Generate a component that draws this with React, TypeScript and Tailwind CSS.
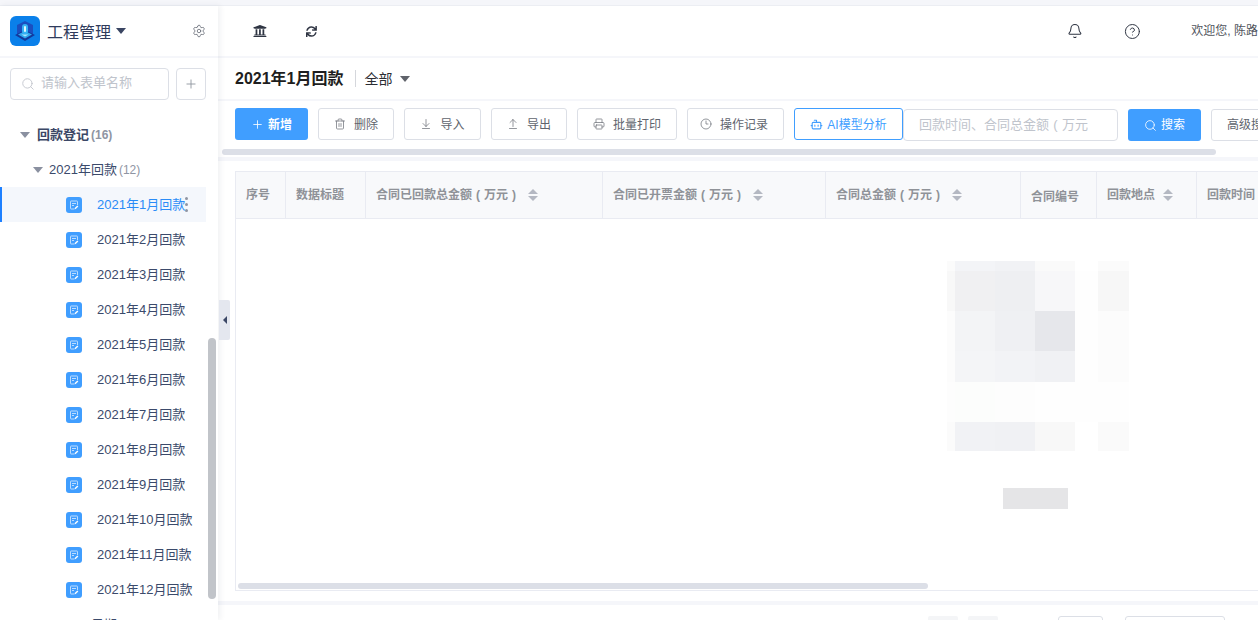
import React from "react";
import { ArrowDownToLine, ArrowUpFromLine, Bell, Bot, CircleHelp, Clock3, Plus, Printer, Search, Settings, Trash2 } from "lucide-react";
import { FaSync, FaUniversity } from "react-icons/fa";

const months = ["2021年1月回款", "2021年2月回款", "2021年3月回款", "2021年4月回款", "2021年5月回款", "2021年6月回款", "2021年7月回款", "2021年8月回款", "2021年9月回款", "2021年10月回款", "2021年11月回款", "2021年12月回款"];

const tools = [
  { label: "删除", icon: Trash2, width: "w-[76px]" },
  { label: "导入", icon: ArrowDownToLine, width: "w-[77px]" },
  { label: "导出", icon: ArrowUpFromLine, width: "w-[76px]" },
  { label: "批量打印", icon: Printer, width: "w-[100px]" },
  { label: "操作记录", icon: Clock3, width: "w-[97px] pr-[3px]" },
];

const columns = [
  { label: "序号", width: "w-[50px]" },
  { label: "数据标题", width: "w-[80px]" },
  { label: "合同已回款总金额", unit: true, width: "w-[237px]", sort: true },
  { label: "合同已开票金额", unit: true, width: "w-[223px]", sort: true },
  { label: "合同总金额", unit: true, width: "w-[195px]", sort: true },
  { label: "合同编号", width: "w-[76px]", low: true },
  { label: "回款地点", width: "w-[100px]", sort: true },
  { label: "回款时间", width: "w-[100px]" },
];

// pixelated placeholder in the middle of the empty table
const tiles = [
  [947, 261, 8, 10, "#fbfbfb"], [955, 261, 40, 10, "#f3f4f7"], [995, 261, 40, 10, "#f1f2f5"], [1035, 261, 40, 10, "#fafafa"], [1098, 261, 31, 10, "#fbfbfb"],
  [947, 271, 8, 40, "#f8f8f8"], [955, 271, 40, 40, "#f0f0f2"], [995, 271, 40, 40, "#eeeff2"], [1035, 271, 40, 40, "#f7f7f9"], [1075, 271, 23, 40, "#fefefe"], [1098, 271, 31, 40, "#f7f7f7"],
  [947, 311, 8, 40, "#fcfcfc"], [955, 311, 40, 40, "#f3f4f6"], [995, 311, 40, 40, "#eff0f3"], [1035, 311, 40, 40, "#e6e7eb"], [1075, 311, 23, 40, "#fefefe"], [1098, 311, 31, 40, "#fcfcfc"],
  [947, 351, 8, 31, "#fcfcfc"], [955, 351, 40, 31, "#f4f5f7"], [995, 351, 40, 31, "#f2f3f6"], [1035, 351, 40, 31, "#f0f1f4"], [1075, 351, 23, 31, "#fefefe"], [1098, 351, 31, 31, "#fcfcfc"],
  [947, 382, 8, 40, "#fdfdfd"], [955, 382, 40, 40, "#fcfdfc"], [995, 382, 40, 40, "#fdfdfd"], [1035, 382, 94, 40, "#fefefe"],
  [947, 422, 8, 29, "#fbfbfb"], [955, 422, 40, 29, "#f1f2f5"], [995, 422, 40, 29, "#f0f1f4"], [1035, 422, 40, 29, "#f8f8f8"], [1098, 422, 31, 29, "#fafafa"],
  [1003, 488, 65, 21, "#e5e5e7"],
] as const;

// brackets sit centred in a full-width cell in the reference
function Paren({ children }: { children: string }) {
  return <span className="inline-block w-[1em] text-center">{children}</span>;
}

function Caret({ className }: { className: string }) {
  return <span className={`inline-block h-0 w-0 border-x-[5px] border-t-[6px] border-x-transparent ${className}`} />;
}

function SortArrows() {
  return (
    <span className="ml-2 flex flex-col gap-[2px]">
      <span className="h-0 w-0 border-x-[5px] border-b-[5px] border-x-transparent border-b-[#b4b8c2]" />
      <span className="h-0 w-0 border-x-[5px] border-t-[5px] border-x-transparent border-t-[#b4b8c2]" />
    </span>
  );
}

function FormIcon() {
  return (
    <span className="flex h-4 w-4 shrink-0 items-center justify-center rounded-[3px] bg-[#409eff]">
      <svg width="10" height="10" viewBox="0 0 10 10" fill="none" stroke="#bcdcff" strokeWidth="1">
        <path d="M8.500 5V1.500a.5.5 0 0 0-.5-.5H2a.5.5 0 0 0-.5.5v7a.5.5 0 0 0 .5.5h3.500" />
        <path d="M3 3.500h4M3 5.500h2" />
        <path d="M6 8.800 8.800 6" strokeWidth="1.400" stroke="#ffffff" />
      </svg>
    </span>
  );
}

function Logo() {
  return (
    <span className="flex h-[30px] w-[30px] shrink-0 items-center justify-center rounded-[6px] bg-[#0a80ea]">
      <svg width="26" height="26" viewBox="0 0 26 26">
        <path d="M13 3l8 4v9l-8 4-8-4V7z" fill="#1a4fc0" />
        <path d="M3 17l10-5 10 5-10 6z" fill="#12399c" />
        <path d="M6 16.500l7-3.500 7 3.500-7 4z" fill="#2fa8ee" />
        <rect x="10" y="6" width="6" height="10" rx="3" fill="#35b4f5" />
        <rect x="12" y="8" width="2" height="6" rx="1" fill="#dff6ff" />
        <path d="M9.500 16.500h7l-3.500 2z" fill="#a8e6ff" />
      </svg>
    </span>
  );
}

function Sidebar() {
  return (
    <aside className="relative z-10 flex w-[218px] shrink-0 flex-col overflow-hidden bg-white shadow-[2px_0_6px_rgba(30,40,70,0.07)]">
      <div className="flex h-[50px] shrink-0 items-center pl-[10px] pr-[12px]">
        <Logo />
        <span className="ml-[7px] pt-[3px] text-[16px] text-[#2f3b5c]">工程管理</span>
        <Caret className="ml-[5px] border-t-[#3a4562]" />
        <Settings className="ml-auto h-[14px] w-[14px] text-[#70757f]" strokeWidth={1.5} />
      </div>
      <div className="h-[2px] shrink-0 bg-[#f5f6fa]" />
      <div className="mt-[10px] flex shrink-0 gap-[7px] pl-[10px]">
        <div className="flex h-[32px] w-[159px] items-center rounded-[4px] border border-[#dcdfe6] pl-[10px]">
          <Search className="h-[14px] w-[14px] text-[#c0c4cc]" strokeWidth={1.5} />
          <span className="ml-[6px] pb-[2px] text-[13px] text-[#c0c4cc]">请输入表单名称</span>
        </div>
        <div className="flex h-[32px] w-[30px] items-center justify-center rounded-[4px] border border-[#dcdfe6]">
          <Plus className="h-[14px] w-[14px] text-[#8d929c]" strokeWidth={1.5} />
        </div>
      </div>
      <div className="mt-[17px] flex flex-col">
        <div className="flex h-[35px] shrink-0 items-center pl-[20px] text-[13px]">
          <Caret className="border-t-[#8a90a0]" />
          <span className="ml-[7px] font-bold text-[#3b4766]">回款登记</span>
          <span className="ml-[2px] text-[12px] font-bold text-[#8f95a3]">(16)</span>
        </div>
        <div className="flex h-[35px] shrink-0 items-center pl-[33px] text-[13px]">
          <Caret className="border-t-[#8a90a0]" />
          <span className="ml-[6px] text-[#3b4a6b]">2021年回款</span>
          <span className="ml-[2px] text-[12px] text-[#8f95a3]">(12)</span>
        </div>
        {months.map((m, i) => (
          <div key={m} className={`relative flex h-[35px] w-[206px] shrink-0 items-center text-[13px] ${i === 0 ? "border-l-2 border-[#1e80ff] bg-[#f4f7fc] pl-[64px] text-[#2a8cf7]" : "pl-[66px] text-[#3b4a6b]"}`}>
            <FormIcon />
            <span className="ml-[15px] whitespace-nowrap pt-[1px]">{m}</span>
            {i === 0 && (
              <span className="absolute left-[183px] top-[10px] flex flex-col gap-[3px]">
                <span className="h-[3px] w-[3px] rounded-full bg-[#8f95a3]" />
                <span className="h-[3px] w-[3px] rounded-full bg-[#8f95a3]" />
                <span className="h-[3px] w-[3px] rounded-full bg-[#8f95a3]" />
              </span>
            )}
          </div>
        ))}
        <div className="flex h-[35px] shrink-0 items-center pl-[91px] text-[13px] text-[#3b4a6b]">日期</div>
      </div>
      <div className="absolute left-[208px] top-[332px] h-[261px] w-[8px] rounded-[4px] bg-[#c1c4c9]" />
    </aside>
  );
}

function Toolbar() {
  return (
    <div className="relative h-[56px] shrink-0 overflow-hidden">
      <div className="flex h-[48px] items-start gap-[10px] pl-[17px] pt-[7px] text-[12px] whitespace-nowrap">
        <div className="flex h-[32px] w-[73px] shrink-0 items-center justify-center rounded-[3px] bg-[#409eff] font-bold text-white">
          <Plus className="mr-[4px] h-[13px] w-[13px]" strokeWidth={1.5} />
          <span className="pt-[1px]">新增</span>
        </div>
        {tools.map((t) => (
          <div key={t.label} className={`flex h-[32px] shrink-0 items-center justify-center rounded-[3px] border border-[#dcdfe6] text-[#60646d] ${t.width}`}>
            <t.icon className="mr-[8px] h-[12px] w-[12px] text-[#70747c]" strokeWidth={1.5} />
            <span className="pt-[1px]">{t.label}</span>
          </div>
        ))}
        <div className="flex shrink-0">
          <div className="flex h-[32px] w-[109px] items-center justify-center rounded-[3px] border border-[#409eff] text-[#409eff]">
            <Bot className="mr-[4px] h-[13px] w-[13px]" strokeWidth={2} />
            <span className="pt-[1px]">AI模型分析</span>
          </div>
          <div className="mt-[1px] flex h-[32px] w-[215px] items-center rounded-[4px] border border-[#dcdfe6] pl-[15px] text-[13px] text-[#c0c4cc]">
            回款时间、合同总金额<Paren>(</Paren>万元
          </div>
          <div className="ml-[10px] mt-[1px] flex h-[32px] w-[73px] items-center justify-center rounded-[3px] bg-[#409eff] text-white">
            <Search className="mr-[4px] h-[13px] w-[13px]" strokeWidth={1.5} />
            搜索
          </div>
          <div className="ml-[10px] mt-[1px] flex h-[32px] w-[100px] items-center rounded-[3px] border border-[#dcdfe6] pl-[15px] text-[#60646d]">
            高级搜索
          </div>
        </div>
      </div>
      <div className="absolute left-[4px] top-[48px] h-[6px] w-[994px] rounded-[3px] bg-[#dcdfe7]" />
    </div>
  );
}

function DataTable() {
  return (
    <div className="relative ml-[17px] mt-[10px] h-[420px] shrink-0 overflow-hidden border border-r-0 border-[#e9ebf2]">
      <div className="flex h-[47px] border-b border-[#e9ebf2] bg-[#f8f9fb] text-[12px] font-bold text-[#8f9298]">
        {columns.map((c) => (
          <div key={c.label} className={`flex h-full shrink-0 items-center border-r border-[#e9ebf2] pl-[10px] ${c.width} ${c.low ? "pt-[3px]" : ""}`}>
            <span className="whitespace-nowrap">
              {c.label}
              {c.unit && (
                <>
                  <Paren>(</Paren>万元<Paren>)</Paren>
                </>
              )}
            </span>
            {c.sort && <SortArrows />}
          </div>
        ))}
      </div>
      <div className="absolute bottom-[1px] left-[2px] h-[6px] w-[690px] rounded-[3px] bg-[#dcdfe7]" />
    </div>
  );
}

export default function App() {
  return (
    <div className="h-[620px] w-[1258px] overflow-hidden bg-white font-['Liberation_Sans','Noto_Sans_CJK_SC',sans-serif]">
      <div className="h-[6px] border-b border-[#eceef3] bg-[#f5f6fa]" />
      <div className="relative flex h-[614px]">
        <Sidebar />
        <main className="flex min-w-0 flex-1 flex-col overflow-hidden">
          <header className="flex h-[50px] shrink-0 items-center pl-[35px] text-[#2e3442]">
            <FaUniversity className="h-[14px] w-[14px]" />
            <FaSync className="ml-[39px] h-[11px] w-[11px]" />
            <Bell className="ml-[750px] h-[16px] w-[16px]" strokeWidth={1.6} />
            <CircleHelp className="ml-[41px] h-[17px] w-[17px]" strokeWidth={1.4} />
            <span className="ml-[51px] whitespace-nowrap text-[12px] text-[#50545c]">欢迎您, 陈路</span>
          </header>
          <div className="h-[2px] shrink-0 bg-[#f5f6fa]" />
          <div className="flex h-[41px] shrink-0 items-center pl-[17px]">
            <span className="text-[16px] font-bold text-[#1e1e20]">2021年1月回款</span>
            <span className="ml-[11px] h-[17px] w-px bg-[#d5d7dc]" />
            <span className="ml-[9px] pt-[1px] text-[14px] text-[#2b2d33]">全部</span>
            <Caret className="ml-[7px] border-t-[#60636b]" />
          </div>
          <div className="h-[2px] shrink-0 bg-[#f5f6fa]" />
          <Toolbar />
          <div className="h-[4px] shrink-0 bg-[#f5f6fa]" />
          <DataTable />
          <div className="mt-[10px] h-[4px] shrink-0 bg-[#f5f6fa]" />
          <div className="flex items-start pl-[710px] pt-[11px]">
            <span className="h-[20px] w-[30px] rounded-[2px] bg-[#f4f5f7]" />
            <span className="ml-[10px] h-[20px] w-[30px] rounded-[2px] bg-[#f4f5f7]" />
            <span className="ml-[60px] h-[20px] w-[45px] rounded-[3px] border border-[#dcdfe6]" />
            <span className="ml-[22px] h-[20px] w-[100px] rounded-[3px] border border-[#dcdfe6]" />
          </div>
        </main>
        <div className="absolute left-[219px] top-[294px] z-20 flex h-[40px] w-[11px] items-center justify-center rounded-r-[2px] bg-[#e4e7ef]">
          <span className="h-0 w-0 border-y-[4px] border-r-[4px] border-y-transparent border-r-[#3b4766]" />
        </div>
        <svg className="pointer-events-none absolute left-0 top-[-6px]" width="1258" height="620">
          {tiles.map(([x, y, w, h, fill]) => (
            <rect key={`${x}-${y}`} x={x} y={y} width={w} height={h} fill={fill} />
          ))}
        </svg>
      </div>
    </div>
  );
}
